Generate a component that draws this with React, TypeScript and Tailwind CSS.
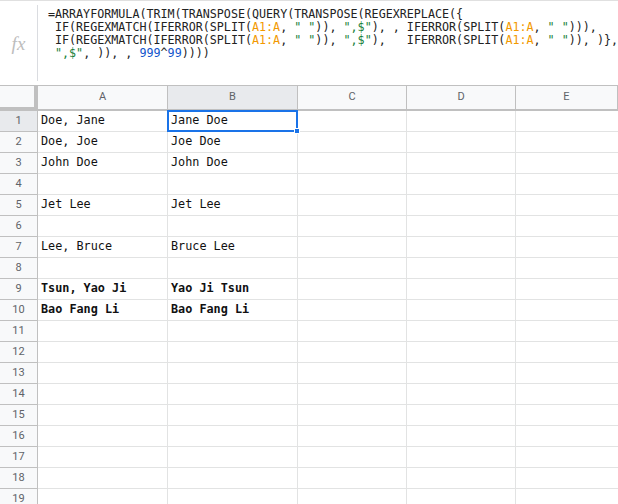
import React from "react";

const G = "text-[#188038]";
const O = "text-[#f29900]";
const B = "text-[#1155cc]";

function Formula() {
  const s = (t: string, c: string) => <span className={c}>{t}</span>;
  return (
    <div className="whitespace-pre font-['DejaVu_Sans_Mono',monospace] text-[11.7px] leading-[13px] text-[#222]">
      <div>=ARRAYFORMULA(TRIM(TRANSPOSE(QUERY(TRANSPOSE(REGEXREPLACE({"{"}</div>
      <div>
        {" IF(REGEXMATCH(IFERROR(SPLIT("}
        {s("A1:A", O)}
        {", "}
        {s('" "', G)}
        {")), "}
        {s('",$"', G)}
        {"), , IFERROR(SPLIT("}
        {s("A1:A", O)}
        {", "}
        {s('" "', G)}
        {"))),"}
      </div>
      <div>
        {" IF(REGEXMATCH(IFERROR(SPLIT("}
        {s("A1:A", O)}
        {", "}
        {s('" "', G)}
        {")), "}
        {s('",$"', G)}
        {"),   IFERROR(SPLIT("}
        {s("A1:A", O)}
        {", "}
        {s('" "', G)}
        {")), )},"}
      </div>
      <div>
        {" "}
        {s('",$"', G)}
        {", )), , "}
        {s("999", B)}
        {"^"}
        {s("99", B)}
        {"))))"}
      </div>
    </div>
  );
}

const data: [string, string, boolean][] = [
  ["Doe, Jane", "Jane Doe", false],
  ["Doe, Joe", "Joe Doe", false],
  ["John Doe", "John Doe", false],
  ["", "", false],
  ["Jet Lee", "Jet Lee", false],
  ["", "", false],
  ["Lee, Bruce", "Bruce Lee", false],
  ["", "", false],
  ["Tsun, Yao Ji", "Yao Ji Tsun", true],
  ["Bao Fang Li", "Bao Fang Li", true],
];

export default function App() {
  const rows = Array.from({ length: 19 }, (_, i) => i + 1);
  return (
    <div className="w-[618px] h-[504px] overflow-hidden bg-white relative">
      {/* formula bar */}
      <div className="h-[86px] border-t border-[#e0e0e0] border-b border-b-[#c0c0c0] flex">
        <div className="w-[37px] flex items-center justify-center">
          <span className="font-['Liberation_Serif',serif] italic text-[19px] text-[#bdbdbd] mt-[2px]">fx</span>
        </div>
        <div className="my-[4px] w-px bg-[#dadce0]" />
        <div className="pl-[10px] pt-[7px]">
          <Formula />
        </div>
      </div>
      {/* grid */}
      <div className="grid grid-cols-[38px_130px_130px_109px_109px_1fr] font-['Roboto',sans-serif]">
        {/* header */}
        <div className="h-[25px] bg-[#f8f9fa] border-r-[4px] border-b-[4px] border-[#c0c0c0]" />
        {["A", "B", "C", "D", "E"].map((c) => (
          <div
            key={c}
            className={`h-[25px] flex items-center justify-center text-[11px] text-[#5f6368] border-r border-r-[#c0c0c0] border-b-2 border-b-[#c0c0c0] ${
              c === "B" ? "bg-[#e8eaed]" : "bg-[#f8f9fa]"
            }`}
          >
            {c}
          </div>
        ))}
        {rows.map((r) => {
          const d = data[r - 1];
          const bold = d ? d[2] : false;
          const txt = `font-['DejaVu_Sans_Mono',monospace] text-[11.8px] text-[#111] pl-[3px] flex items-center ${
            bold ? "font-bold" : ""
          }`;
          return (
            <React.Fragment key={r}>
              <div
                className={`h-[21px] flex items-center justify-center text-[11px] text-[#5f6368] border-r border-r-[#c0c0c0] border-b border-b-[#c0c0c0] ${
                  r === 1 ? "bg-[#e8eaed]" : "bg-[#f8f9fa]"
                }`}
              >
                {r}
              </div>
              <div className={`h-[21px] border-r border-b border-[#e2e3e3] ${txt}`}>{d ? d[0] : ""}</div>
              <div className={`h-[21px] border-r border-b border-[#e2e3e3] ${txt}`}>{d ? d[1] : ""}</div>
              <div className="h-[21px] border-r border-b border-[#e2e3e3]" />
              <div className="h-[21px] border-r border-b border-[#e2e3e3]" />
              <div className="h-[21px] border-b border-[#e2e3e3]" />
            </React.Fragment>
          );
        })}
      </div>
      {/* selection */}
      <div className="absolute left-[167px] top-[110px] w-[131px] h-[22px] border-2 border-[#1a73e8] pointer-events-none" />
      <div className="absolute left-[294px] top-[128px] w-[6px] h-[6px] bg-[#1a73e8] border border-white" />
    </div>
  );
}
